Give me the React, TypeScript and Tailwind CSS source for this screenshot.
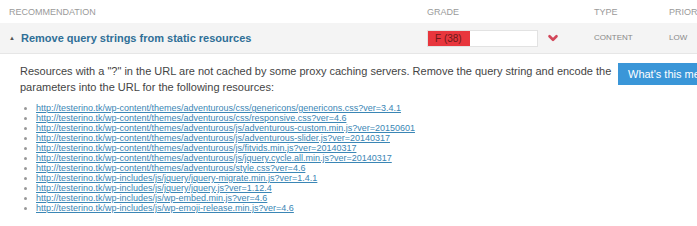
import { ChevronDown } from 'lucide-react';

const resources = [
  'http://testerino.tk/wp-content/themes/adventurous/css/genericons/genericons.css?ver=3.4.1',
  'http://testerino.tk/wp-content/themes/adventurous/css/responsive.css?ver=4.6',
  'http://testerino.tk/wp-content/themes/adventurous/js/adventurous-custom.min.js?ver=20150601',
  'http://testerino.tk/wp-content/themes/adventurous/js/adventurous-slider.js?ver=20140317',
  'http://testerino.tk/wp-content/themes/adventurous/js/fitvids.min.js?ver=20140317',
  'http://testerino.tk/wp-content/themes/adventurous/js/jquery.cycle.all.min.js?ver=20140317',
  'http://testerino.tk/wp-content/themes/adventurous/style.css?ver=4.6',
  'http://testerino.tk/wp-includes/js/jquery/jquery-migrate.min.js?ver=1.4.1',
  'http://testerino.tk/wp-includes/js/jquery/jquery.js?ver=1.12.4',
  'http://testerino.tk/wp-includes/js/wp-embed.min.js?ver=4.6',
  'http://testerino.tk/wp-includes/js/wp-emoji-release.min.js?ver=4.6',
];

export default function App() {
  return (
    <div className="w-[697px] h-[226px] overflow-hidden bg-white font-['Liberation_Sans',Arial,sans-serif]">
      <div className="w-[760px]">
        {/* header */}
        <div className="flex h-[23px] items-center pt-[3px] text-[9px] uppercase text-[#9a9a9a]">
          <div className="flex-1 pl-[9px]">Recommendation</div>
          <div className="w-[167px]">Grade</div>
          <div className="w-[75px]">Type</div>
          <div className="w-[91px]">Priority</div>
        </div>

        {/* row */}
        <div className="flex h-[31px] items-center border-b border-[#e6e6e6] bg-[#f4f4f4]">
          <div className="flex flex-1 items-center pl-[9px]">
            <span className="mr-[6px] text-[6px] text-[#555]">▲</span>
            <span className="text-[11px] font-bold text-[#2f6f97]">Remove query strings from static resources</span>
          </div>
          <div className="flex w-[167px] items-center">
            <div className="flex h-[17px] w-[111px] border border-[#e2e2e2] bg-white">
              <div className="flex w-[42px] items-center bg-[#e8363d] pl-[7px] text-[10px] text-[#6b1a1a]">F (38)</div>
            </div>
            <ChevronDown className="ml-[8px] h-[14px] w-[14px] text-[#d2475a]" strokeWidth={4.5} />
          </div>
          <div className="w-[75px] text-[8px] uppercase text-[#888]">Content</div>
          <div className="w-[91px] text-[8px] uppercase text-[#888]">Low</div>
        </div>

        {/* details */}
        <div className="flex items-start pt-[9px]">
          <div className="w-[618px] shrink-0 pl-[20px]">
            <p className="text-[11px] leading-[16px] text-[#444]">
              Resources with a "?" in the URL are not cached by some proxy caching servers. Remove the query string and encode the parameters into the URL for the following resources:
            </p>
            <ul className="mt-[8px] list-disc pl-[16px] text-[9px] leading-[10px] text-[#999]">
              {resources.map((r) => (
                <li key={r}>
                  <a href={r} className="text-[#3a86b5] underline">{r}</a>
                </li>
              ))}
            </ul>
          </div>
          <button className="h-[22px] w-[110px] shrink-0 bg-[#3a96d8] pl-[10px] text-left text-[11px] text-white">
            What's this mean?
          </button>
        </div>
      </div>
    </div>
  );
}
